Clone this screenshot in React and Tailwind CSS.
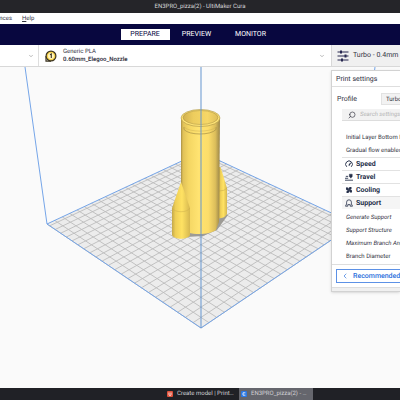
import React from "react";
import { FiChevronDown, FiChevronLeft, FiSearch } from "react-icons/fi";

const CELLS = 23.5;

// Corners of the build plate in scene coordinates
const plate = {
  back: [201, 152],
  right: [355, 224],
  front: [201, 328],
  left: [47, 224],
};

// Projects a point of the unit square onto the plate
const project = (u, v) => {
  const [x0, y0] = plate.back;
  const [x1, y1] = plate.right;
  const [x2, y2] = plate.front;
  const [x3, y3] = plate.left;
  const dx1 = x1 - x2;
  const dx2 = x3 - x2;
  const dx3 = x0 - x1 + x2 - x3;
  const dy1 = y1 - y2;
  const dy2 = y3 - y2;
  const dy3 = y0 - y1 + y2 - y3;
  const det = dx1 * dy2 - dx2 * dy1;
  const g = (dx3 * dy2 - dx2 * dy3) / det;
  const h = (dx1 * dy3 - dx3 * dy1) / det;
  const w = g * u + h * v + 1;
  return [
    ((x1 - x0 + g * x1) * u + (x3 - x0 + h * x3) * v + x0) / w,
    ((y1 - y0 + g * y1) * u + (y3 - y0 + h * y3) * v + y0) / w,
  ];
};

const line = (a, b) => `M${a.join(" ")}L${b.join(" ")}`;

const gridPath = Array.from({ length: 24 }, (_, i) => {
  const t = 1 - i / CELLS;
  return line(project(t, 0), project(t, 1)) + line(project(0, t), project(1, t));
}).join("");

const SlidersIcon = () => (
  <svg viewBox="0 0 12 12" className="size-3 shrink-0" fill="none" stroke="#26264f" aria-hidden="true">
    <path d="M0.5 2h11M0.5 6h11M0.5 10h11" strokeWidth="1" />
    <path d="M4 0.5v3M8.5 4.5v3M5 8.5v3" strokeWidth="2" />
  </svg>
);

const ExtruderIcon = () => (
  <svg viewBox="0 0 12 12" className="size-3 shrink-0" aria-hidden="true">
    <path d="M1 6v5.2h5" fill="none" stroke="#3c3421" strokeWidth="1.2" />
    <circle cx="6" cy="6" r="4.9" fill="#f7d34b" stroke="#3c3421" strokeWidth="1.2" />
    <circle cx="6" cy="6" r="3" fill="#fff4c0" />
    <path d="M5 4.8L6.3 4v4" fill="none" stroke="#3c3421" strokeWidth="1.1" />
  </svg>
);

const SpeedIcon = () => (
  <svg viewBox="0 0 10 10" className="size-2 shrink-0" fill="none" stroke="#26304a" aria-hidden="true">
    <path d="M2.2 8.5A4.2 4.2 0 1 1 7.8 8.5" strokeWidth="1.2" />
    <path d="M4.8 7L7 3.5" strokeWidth="1.4" />
  </svg>
);

const TravelIcon = () => (
  <svg viewBox="0 0 10 10" className="size-2 shrink-0" fill="none" stroke="#26304a" aria-hidden="true">
    <path d="M0 9h10M0 6.6h4M1 4.2h3" strokeWidth="1.1" />
    <path d="M5.5 1.5h3.5v2.5L7.3 6.5 5.5 4z" fill="#26304a" strokeWidth="0.6" />
  </svg>
);

const CoolingIcon = () => (
  <svg viewBox="0 0 10 10" className="size-2 shrink-0" fill="#26304a" aria-hidden="true">
    <g transform="rotate(30 5 5)">
      <path d="M5 5C2.5 4 2.8.8 6 .4 7.6 1.6 6.6 3.8 5 5z" />
      <path d="M5 5C6 2.5 9.2 2.8 9.6 6 8.4 7.6 6.2 6.6 5 5z" />
      <path d="M5 5C7.5 6 7.2 9.2 4 9.6 2.4 8.4 3.4 6.2 5 5z" />
      <path d="M5 5C4 7.5.8 7.2.4 4 1.6 2.4 3.8 3.4 5 5z" />
    </g>
  </svg>
);

const SupportIcon = () => (
  <svg viewBox="0 0 10 10" className="size-2 shrink-0" fill="none" stroke="#26304a" aria-hidden="true">
    <path d="M2 6.2V4a3 3 0 0 1 6 0v2.2L9.4 9H6.5V7h-3v2H.6z" strokeWidth="1" />
  </svg>
);

const categories = [
  { name: "Speed", icon: <SpeedIcon /> },
  { name: "Travel", icon: <TravelIcon /> },
  { name: "Cooling", icon: <CoolingIcon /> },
  { name: "Support", icon: <SupportIcon />, open: true },
];

const supportSettings = [
  { name: "Generate Support", italic: true },
  { name: "Support Structure", italic: true },
  { name: "Maximum Branch Angle", italic: true },
  { name: "Branch Diameter", italic: false },
];

const Scene = () => (
  <svg
    viewBox="0 67 400 321"
    preserveAspectRatio="xMidYMin slice"
    className="block h-full w-full"
    role="img"
    aria-label="Build plate with model"
  >
    <defs>
      <linearGradient id="body">
        <stop offset="0" stopColor="#a89047" />
        <stop offset="0.05" stopColor="#e0c158" />
        <stop offset="0.2" stopColor="#f4d663" />
        <stop offset="0.45" stopColor="#ffe371" />
        <stop offset="0.7" stopColor="#fcdd6a" />
        <stop offset="0.88" stopColor="#dcbe5b" />
        <stop offset="1" stopColor="#998549" />
      </linearGradient>
      <linearGradient id="inside">
        <stop offset="0" stopColor="#d2b250" />
        <stop offset="0.3" stopColor="#edcd5e" />
        <stop offset="0.7" stopColor="#f6d767" />
        <stop offset="1" stopColor="#dfbf58" />
      </linearGradient>
      <linearGradient id="booster">
        <stop offset="0" stopColor="#c4a84a" />
        <stop offset="0.2" stopColor="#efcf56" />
        <stop offset="0.55" stopColor="#ffe263" />
        <stop offset="1" stopColor="#d6b850" />
      </linearGradient>
    </defs>

    <path d="M201 152L355 224L201 328L47 224z" fill="#ececec" />
    <path d={gridPath} fill="none" stroke="#bcbcbc" strokeWidth="0.9" />
    <path
      d="M201 152L355 224L201 328L47 224zM47 224L25 67M355 224L375 67"
      fill="none"
      stroke="#75a5e8"
      strokeWidth="1"
    />

    {/* Shadow under the model */}
    <path d="M186 237L203 236L217 230L228 215L221 213L188 228z" fill="#9d9b95" />

    {/* Rear booster */}
    <path d="M219 167L220.5 167L227 188V214Q225 218 219 218.5z" fill="url(#booster)" />
    <path d="M219 191Q225 191 227 188" fill="none" stroke="#c4a84a" strokeWidth="0.5" />

    {/* Main tube */}
    <path d="M181 118V229C186 235 208 236 216 230L219 222L220 118z" fill="url(#body)" />
    <ellipse cx="200.5" cy="118" rx="19.5" ry="8.5" fill="#ffe476" stroke="#a89045" strokeWidth="0.6" />
    <ellipse cx="200.5" cy="117.5" rx="17.5" ry="7" fill="url(#inside)" stroke="#a89045" strokeWidth="0.5" />
    <path d="M184 127V129.5C189 135.5 211 135.5 216 129.5V127" fill="none" stroke="#a89045" strokeWidth="0.7" />
    <path d="M184 127C189 132.5 211 132.5 216 127" fill="none" stroke="#cfb052" strokeWidth="0.5" />

    {/* Front booster */}
    <path d="M181 182L190 208V235C188 240 174 240 172 235V208z" fill="url(#booster)" />
    <path d="M172 208C175 213 187 213 190 208" fill="none" stroke="#cdae4c" strokeWidth="0.5" />

    <path d="M201 67V328" stroke="#6595cf" strokeWidth="1" />
  </svg>
);

const SettingsPanel = () => (
  <aside className="absolute top-[3px] right-0 w-[69px] overflow-hidden border border-r-0 border-[#d2d2d2] bg-white whitespace-nowrap shadow-sm">
    <h2 className="h-4 border-b border-[#dedede] pl-1 text-[7px] leading-4 text-[#31313f]">
      Print settings
    </h2>
    <div className="flex h-[22px] items-center gap-6 pt-0.5 pl-[5px]">
      <label htmlFor="profile" className="w-5 text-[7px]">Profile</label>
      <select
        id="profile"
        className="h-3 w-20 shrink-0 appearance-none border border-[#e2e2e2] bg-[#f2f2f2] pl-1 text-[6px]"
      >
        <option>Turbo - 0.4mm</option>
      </select>
    </div>
    <label className="ml-2.5 flex h-3 items-center gap-1 border-b border-[#ddd] bg-[#f2f2f2] pl-1.5">
      <FiSearch className="size-2 shrink-0 -scale-x-100 text-[#33333f]" />
      <input
        type="text"
        aria-label="Search settings"
        placeholder="Search settings"
        className="w-20 bg-transparent text-[6px] leading-3 italic outline-none placeholder:text-[#b4b4b4]"
      />
    </label>
    <div className="pt-2.5 pl-3.5 text-[6px] leading-[13px]">
      <p>Initial Layer Bottom Flow</p>
      <p>Gradual flow enabled</p>
    </div>
    <div className="ml-2.5">
      {categories.map((item) => (
        <button
          key={item.name}
          type="button"
          className={`flex h-[13px] w-full items-center gap-[3px] border-t border-[#e2e2e2] pl-[3px] text-[7px] font-bold text-[#26304a] ${
            item.open ? "bg-[#f5f5f5]" : ""
          }`}
        >
          {item.icon}
          {item.name}
        </button>
      ))}
    </div>
    <ul className="pt-0.5 pl-3.5 text-[6px] leading-[13px]">
      {supportSettings.map((item) => (
        <li key={item.name} className={item.italic ? "italic" : ""}>
          {item.name}
        </li>
      ))}
    </ul>
    <div className="mt-px border-t border-[#dedede] py-1 pl-1">
      <button
        type="button"
        className="flex h-3.5 w-24 items-center gap-1 border border-[#5c91e6] pl-1 text-[7px] font-medium text-[#2b6fdc]"
      >
        <FiChevronLeft className="size-2 shrink-0" />
        Recommended
      </button>
    </div>
    <div className="h-1 border-t border-[#dedede] bg-[#f0f0f0]" />
  </aside>
);

const App = () => {
  return (
    <div className="flex h-screen flex-col overflow-hidden bg-[#fafafa] font-[Roboto,sans-serif] text-[#33333f] [text-rendering:geometricPrecision] [&_*]:[text-rendering:inherit]">
      <header className="h-[13px] shrink-0 bg-[#252529] text-center text-[6px] leading-[13px] text-[#d5d5d8]">
        EN3PRO_pizza(2) - UltiMaker Cura
      </header>

      <div className="flex h-[11px] shrink-0 gap-2.5 overflow-hidden bg-white text-[6px] leading-[11px]">
        <button type="button" className="-ml-5">Preferences</button>
        <button type="button">
          <span className="underline">H</span>elp
        </button>
      </div>

      <nav className="flex h-[21px] shrink-0 items-center justify-center bg-[#08073f] pr-0.5 text-[7px] text-white">
        <button type="button" className="h-[11px] w-[49px] bg-white text-[#08073f]">PREPARE</button>
        <button type="button" className="w-[54px]">PREVIEW</button>
        <button type="button" className="w-[54px]">MONITOR</button>
      </nav>

      <div className="flex h-[22px] shrink-0 border-b border-[#d8d8d8] bg-white whitespace-nowrap">
        <button type="button" aria-label="Select printer" className="flex w-[39px] items-center justify-end border-r border-[#dedede] pr-1">
          <FiChevronDown className="size-1.5 text-[#777]" />
        </button>
        <button type="button" className="flex min-w-0 flex-1 items-center gap-1.5 px-1.5 text-left text-[6px] leading-2">
          <ExtruderIcon />
          <span className="flex-1">
            Generic PLA
            <span className="block font-semibold">0.60mm_Elegoo_Nozzle</span>
          </span>
          <FiChevronDown className="size-1.5 text-[#777]" />
        </button>
        <button type="button" className="flex w-[69px] shrink-0 items-center gap-1 overflow-hidden border-l border-[#d8d8d8] bg-[#f0f0f0] pl-[5px] text-[7px]">
          <SlidersIcon />
          Turbo - 0.4mm
        </button>
      </div>

      <main className="relative min-h-0 flex-1">
        <Scene />
        <SettingsPanel />
      </main>

      <footer className="flex h-3 shrink-0 justify-center bg-[#202126] pl-[78px] text-[6px] leading-3 whitespace-nowrap text-[#d0d0d4]">
        <button type="button" className="flex w-[74px] items-center gap-1 pl-0.5">
          <svg viewBox="0 0 6 6" className="size-1.5 shrink-0" aria-hidden="true">
            <rect width="6" height="6" rx="1" fill="#e0523c" />
            <path d="M2 1.5v2a1 1 0 0 0 2 0v-2" fill="none" stroke="#fff" strokeWidth="0.8" />
          </svg>
          Create model | Print…
        </button>
        <button type="button" className="flex w-[74px] items-center gap-1 bg-[#65666d] pl-0.5">
          <svg viewBox="0 0 6 6" className="size-1.5 shrink-0" aria-hidden="true">
            <rect width="6" height="6" rx="1" fill="#2b78e4" />
            <path d="M4.4 1.8H2v2.4h2.4" fill="none" stroke="#fff" strokeWidth="0.8" />
          </svg>
          EN3PRO_pizza(2) - …
        </button>
      </footer>
    </div>
  );
};

export default App;
